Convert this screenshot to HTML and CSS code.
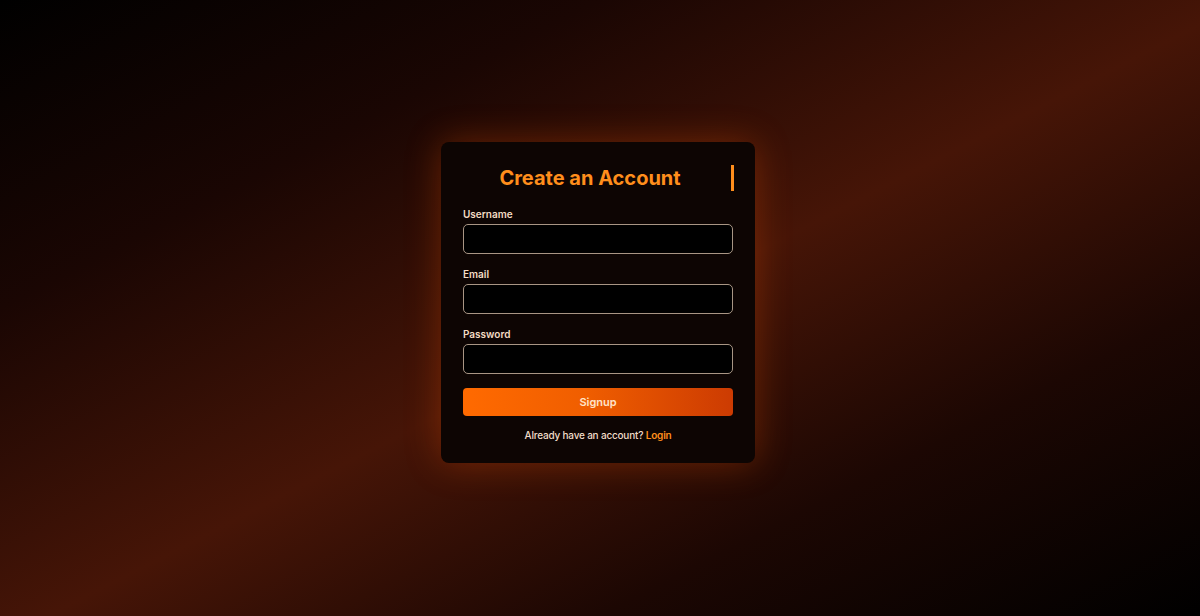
FILE: index.html
```html
<!DOCTYPE html>
<html lang="en">
<head>
<meta charset="utf-8">
<title>Create an Account</title>
<link rel="stylesheet" href="styles.css">
</head>
<body>
<main class="page">
  <form class="card">
    <h2 class="title">Create an Account</h2>
    <div class="field">
      <label class="label" for="username">Username</label>
      <input class="input" id="username" type="text">
    </div>
    <div class="field">
      <label class="label" for="email">Email</label>
      <input class="input" id="email" type="email">
    </div>
    <div class="field">
      <label class="label" for="password">Password</label>
      <input class="input" id="password" type="password">
    </div>
    <button class="btn" type="button">Signup</button>
    <p class="footer">Already have an account? <a class="link" href="#">Login</a></p>
  </form>
</main>
</body>
</html>
```
FILE: styles.css
```css
* { box-sizing: border-box; }
html, body { margin: 0; height: 100%; }
body {
  font-family: Inter, "Noto Sans", "Liberation Sans", sans-serif;
  background: linear-gradient(to bottom right, #000 0%, #1a0603 25%, #461507 52%, #1c0703 75%, #000 100%);
  overflow: hidden;
}
.page {
  height: 616px;
  display: flex;
  justify-content: center;
  padding-top: 142px;
  padding-right: 4px;
}
.card {
  width: 314px;
  height: 321px;
  background: #0d0503;
  border-radius: 8px;
  padding: 23px 22px 0 22px;
  box-shadow: 0 0 36px rgba(255, 90, 0, 0.3);
  display: flex;
  flex-direction: column;
}
.title {
  margin: 0 0 16px 0;
  height: 26px;
  line-height: 26px;
  font-size: 20px;
  font-weight: 700;
  color: #ff8e1c;
  text-align: center;
  padding-right: 14px;
  border-right: 3px solid #ff8e1c;
  width: 271px;
}
.field {
  display: flex;
  flex-direction: column;
  margin-bottom: 13px;
}
.label {
  font-size: 10px;
  font-weight: 600;
  line-height: 14px;
  color: #f3dcc4;
  margin-bottom: 3px;
}
.input {
  height: 30px;
  background: #000;
  border: 1px solid #a89584;
  border-radius: 5px;
  color: #fff;
  font: inherit;
  padding: 0 8px;
  outline: none;
}
.btn {
  margin-top: 1px;
  height: 28px;
  border: 0;
  border-radius: 4px;
  background: linear-gradient(to right, #ff6a00, #f05e00 45%, #cc3b02);
  color: #ffe3c8;
  font-family: inherit;
  font-size: 11px;
  font-weight: 600;
}
.footer {
  margin: 12px 0 0 0;
  text-align: center;
  font-size: 10px;
  font-weight: 500;
  line-height: 14px;
  letter-spacing: -0.2px;
  color: #f0dcc8;
}
.link {
  color: #ff8e1c;
  font-weight: 600;
  text-decoration: none;
}
```
